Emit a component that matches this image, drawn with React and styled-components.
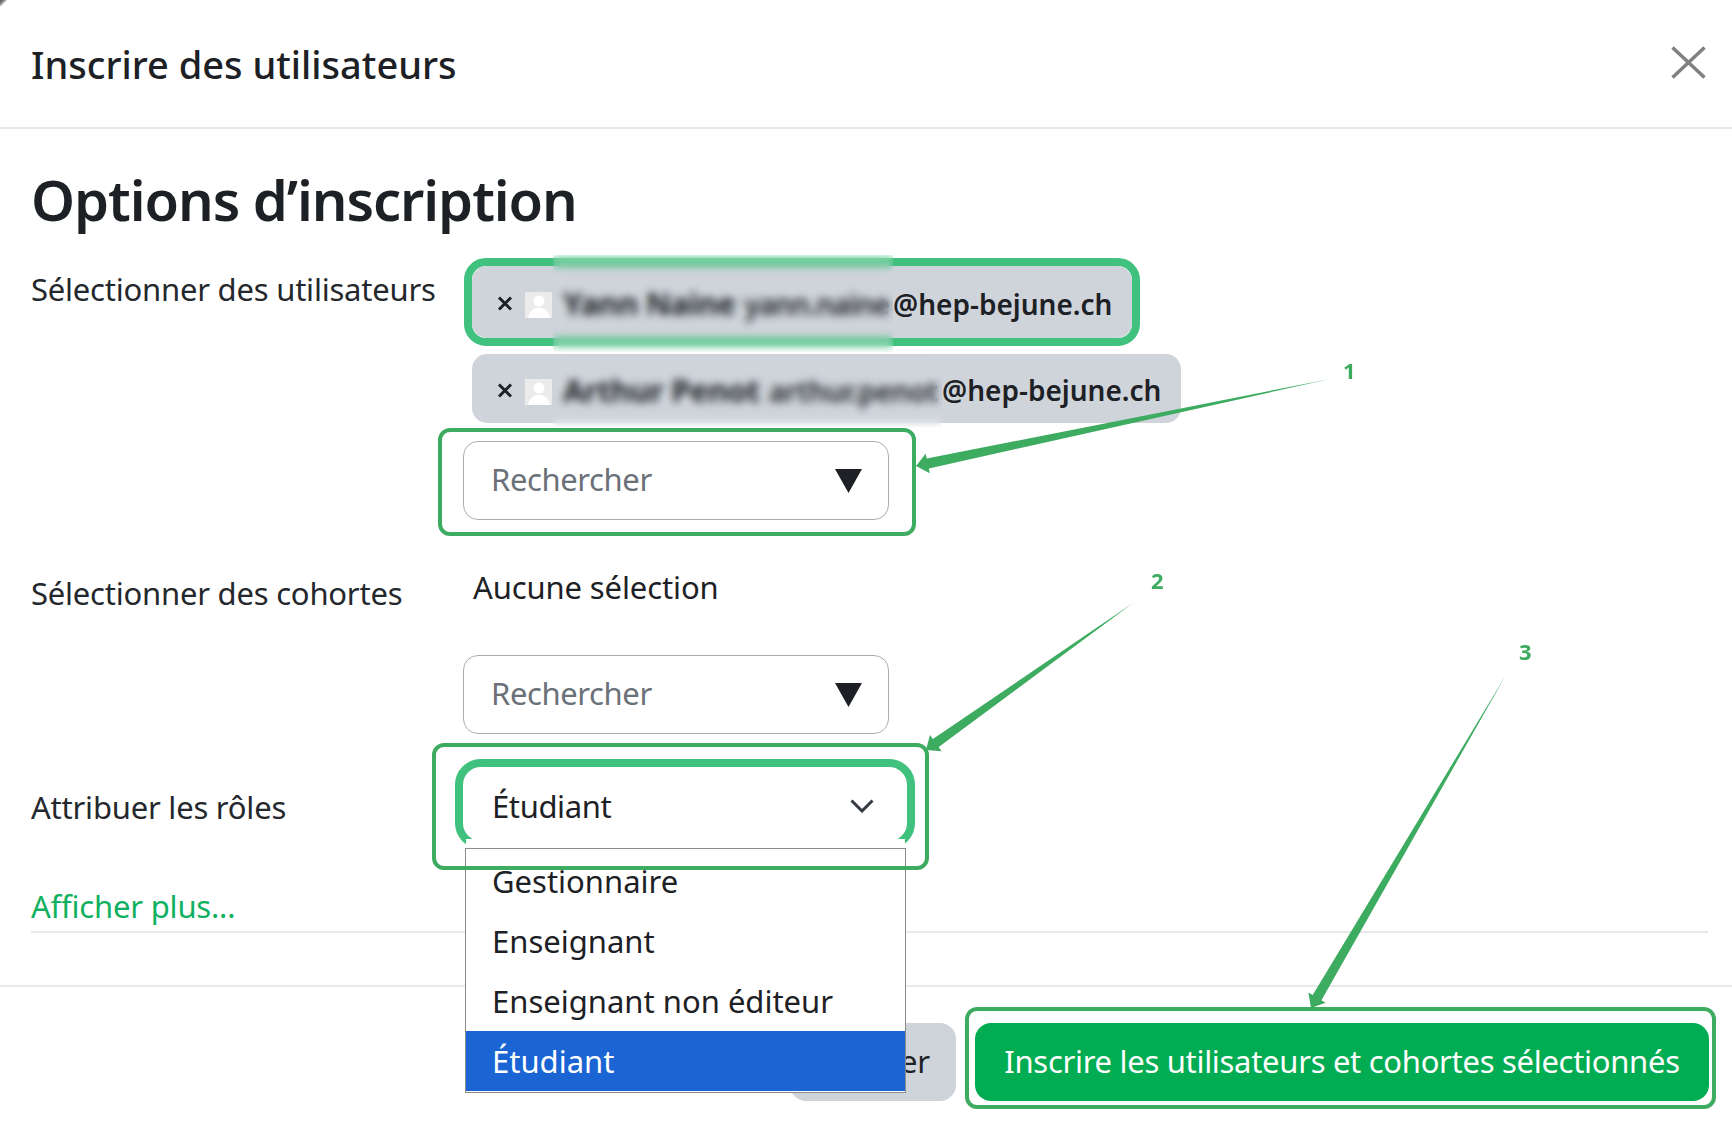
import React from "react";
import styled, { createGlobalStyle } from "styled-components";

const Global = createGlobalStyle`
    html, body {
        margin: 0;
        padding: 0;
        background: #fff;
    }
    * {
        box-sizing: border-box;
    }
    body {
        font-family: "Noto Sans", "Open Sans", sans-serif;
        color: #1d2125;
    }
`;

const GREEN = "#3dab60";

const Page = styled.div`
    position: relative;
    width: 1732px;
    height: 1127px;
    overflow: hidden;
    background: #fff;
`;

const Corner = styled.div`
    position: absolute;
    top: 0;
    left: 0;
    width: 7px;
    height: 6px;
    background: linear-gradient(135deg, #555 0%, #888 35%, transparent 62%);
`;

const Header = styled.header`
    height: 129px;
    padding: 1px 26px 0 31px;
    border-bottom: 2px solid #e6e8ec;
    display: flex;
    align-items: center;
    justify-content: space-between;
`;

const Title = styled.h1`
    margin: 0;
    font-size: 38px;
    line-height: 44px;
    font-weight: 500;
`;

const CloseBtn = styled.svg`
    width: 35px;
    height: 33px;
    margin-bottom: 4px;
`;

const Body = styled.main`
    padding: 37px 24px 52px 31px;
`;

const Heading = styled.h2`
    margin: 0 0 26px;
    font-size: 56px;
    line-height: 66px;
    font-weight: 600;
    letter-spacing: -1.05px;
`;

const FormRow = styled.div`
    display: grid;
    grid-template-columns: 432px 1fr;
    margin-top: ${(props) => props.$top || 0}px;
`;

const Label = styled.label`
    padding-top: ${(props) => props.$top}px;
    font-size: 31px;
    line-height: 44px;
    letter-spacing: -0.22px;
    color: #24282d;
`;

const Field = styled.div`
    display: flex;
    flex-direction: column;
    align-items: flex-start;
`;

const ChipOutline = styled.div`
    margin: 0 0 8px 1px;
    border: 8px solid #41c17e;
    border-radius: 22px;
`;

const Chip = styled.div`
    height: ${(props) => props.$height}px;
    margin-left: ${(props) => props.$left || 0}px;
    padding: 3px 20px 0 25px;
    display: flex;
    align-items: center;
    background: #ced4da;
    border-radius: 15px;
    white-space: nowrap;
`;

const ChipClose = styled.svg`
    width: 16px;
    height: 15px;
    margin-right: 12px;
    flex: none;
`;

const Avatar = styled.svg`
    width: 27px;
    height: 26px;
    margin: 3px 6px 0 0;
    flex: none;
`;

const Blurred = styled.span`
    position: relative;
    display: inline-flex;
    align-items: baseline;
    gap: 9px;
    width: ${(props) => props.$width}px;
    padding-left: 5px;
    &::after {
        content: "";
        position: absolute;
        inset: ${(props) => props.$out}px 0 ${(props) => props.$out}px -5px;
        backdrop-filter: blur(4px);
    }
`;

const Name = styled.span`
    font-size: 31px;
    line-height: 40px;
    font-weight: 700;
    letter-spacing: -0.4px;
`;

const Mail = styled.span`
    font-size: 28px;
    line-height: 40px;
    font-weight: 600;
    letter-spacing: ${(props) => props.$track}px;
`;

const Domain = styled.span`
    font-size: 28px;
    line-height: 40px;
    font-weight: 600;
`;

const Callout = styled.div`
    position: relative;
    margin-top: ${(props) => props.$top || 0}px;
    margin-left: ${(props) => props.$left || 0}px;
    width: ${(props) => props.$width}px;
    padding: ${(props) => props.$pad};
    &::after {
        content: "";
        position: absolute;
        inset: 0;
        border: 4px solid ${GREEN};
        border-radius: 12px;
        pointer-events: none;
        z-index: 3;
    }
`;

const SearchBox = styled.div`
    width: 426px;
    height: 79px;
    padding: 0 26px 4px 27px;
    display: flex;
    align-items: center;
    justify-content: space-between;
    border: 1.5px solid #a9adb3;
    border-radius: 15px;
    background: #fff;
    font-size: 31px;
    letter-spacing: -0.4px;
    color: #6a7178;
`;

const SearchSpaced = styled(SearchBox)`
    margin-top: 45px;
`;

const Caret = styled.svg`
    width: 27px;
    height: 24px;
    margin-top: 4px;
`;

const Plain = styled.div`
    font-size: 31px;
    line-height: 44px;
    letter-spacing: -0.12px;
    margin: -1px 0 1px 10px;
`;

const RoleSelect = styled.div`
    position: relative;
    width: 460px;
    height: 90px;
    padding: 3px 33px 0 29px;
    display: flex;
    align-items: center;
    justify-content: space-between;
    border: 8px solid #41c17e;
    border-radius: 26px;
    background: #fff;
    font-size: 31px;
    letter-spacing: -0.4px;
`;

const Chevron = styled.svg`
    width: 24px;
    height: 14px;
`;

const Menu = styled.ul`
    position: absolute;
    z-index: 2;
    top: 81px;
    left: 2px;
    width: 441px;
    height: 245px;
    margin: 0;
    padding: 2px 0 0;
    list-style: none;
    background: #fff;
    border: 1.5px solid #8b8b8b;
    &::before {
        content: "";
        position: absolute;
        top: -10px;
        left: 0;
        right: 0;
        height: 9px;
        background: #fff;
    }
`;

const MenuItem = styled.li`
    height: 60px;
    padding-left: 26px;
    display: flex;
    align-items: center;
    font-size: 31px;
    letter-spacing: 0;
    background: ${(props) => (props.$active ? "#1a64d3" : "transparent")};
    color: ${(props) => (props.$active ? "#fff" : "#1d2125")};
`;

const More = styled.div`
    margin-top: 14px;
    padding-bottom: 3px;
    border-bottom: 2px solid #e6e8ec;
    font-size: 31px;
    line-height: 44px;
    letter-spacing: -0.2px;
    color: #0fb160;
`;

const Footer = styled.footer`
    padding: 20px 16px 0 0;
    border-top: 2px solid #e6e8ec;
    display: flex;
    justify-content: flex-end;
    align-items: flex-start;
`;

const Btn = styled.button`
    height: 78px;
    border: 0;
    border-radius: 16px;
    padding-bottom: 3px;
    font-family: inherit;
    font-size: 31px;
    letter-spacing: -0.3px;
    white-space: nowrap;
    background: ${(props) => (props.$primary ? "#02ac52" : "#ced4da")};
    color: ${(props) => (props.$primary ? "#fff" : "#1d2125")};
`;

const CancelBtn = styled(Btn)`
    width: 166px;
    margin: 16px 9px 0 0;
`;

const PrimaryBtn = styled(Btn)`
    width: 734px;
`;

const Annotations = styled.svg`
    position: absolute;
    inset: 0;
    z-index: 4;
    pointer-events: none;
`;

const Marker = styled.span`
    position: absolute;
    z-index: 4;
    left: ${(props) => props.$x}px;
    top: ${(props) => props.$y}px;
    font-size: 22px;
    line-height: 26px;
    font-weight: 700;
    color: ${GREEN};
`;

// tapered arrow, thin at the tail and thick behind the head
const arrowPoints = ([x1, y1], [x2, y2], shaft, headLen, headWidth) => {
    const len = Math.hypot(x2 - x1, y2 - y1);
    const ux = (x2 - x1) / len;
    const uy = (y2 - y1) / len;
    const bx = x2 - ux * headLen;
    const by = y2 - uy * headLen;
    const nx = -uy;
    const ny = ux;
    const pt = (x, y) => `${x.toFixed(1)},${y.toFixed(1)}`;
    return [
        pt(x1, y1),
        pt(bx + (nx * shaft) / 2, by + (ny * shaft) / 2),
        pt(bx + (nx * headWidth) / 2, by + (ny * headWidth) / 2),
        pt(x2, y2),
        pt(bx - (nx * headWidth) / 2, by - (ny * headWidth) / 2),
        pt(bx - (nx * shaft) / 2, by - (ny * shaft) / 2),
    ].join(" ");
};

const arrows = [
    [[1330, 379], [916, 466]],
    [[1133, 603], [926, 750]],
    [[1506, 675], [1311, 1008]],
];

const CloseMark = () => (
    <ChipClose viewBox="0 0 16 15">
        <path d="M2 1.5 14 13.5M14 1.5 2 13.5" stroke="#1d2125" strokeWidth="3" fill="none" />
    </ChipClose>
);

const UserPic = () => (
    <Avatar viewBox="0 0 27 26">
        <rect width="27" height="26" fill="#ebebeb" />
        <circle cx="14" cy="9" r="5.5" fill="#fff" />
        <path d="M3 26c1-6 5-9 8-10h6c3 1 7 4 8 10z" fill="#fff" />
    </Avatar>
);

const DownCaret = () => (
    <Caret viewBox="0 0 27 24">
        <path d="M0 0H27L13.5 24z" fill="#1d2125" />
    </Caret>
);

const options = ["Gestionnaire", "Enseignant", "Enseignant non éditeur", "Étudiant"];

const App = () => {
    return (
        <Page>
            <Global />
            <Corner />
            <Header>
                <Title>Inscrire des utilisateurs</Title>
                <CloseBtn viewBox="0 0 35 33">
                    <path d="M1.5 1.5 33.5 31.5M33.5 1.5 1.5 31.5" stroke="#808080" strokeWidth="3.5" fill="none" />
                </CloseBtn>
            </Header>
            <Body>
                <Heading>Options d’inscription</Heading>
                <FormRow>
                    <Label $top={9}>Sélectionner des utilisateurs</Label>
                    <Field>
                        <ChipOutline>
                            <Chip $height={72}>
                                <CloseMark />
                                <UserPic />
                                <Blurred $width={335} $out={-28}>
                                    <Name>Yann Naine</Name>
                                    <Mail $track={-0.7}>yann.naine</Mail>
                                </Blurred>
                                <Domain>@hep-bejune.ch</Domain>
                            </Chip>
                        </ChipOutline>
                        <Chip $height={69} $left={9}>
                            <CloseMark />
                            <UserPic />
                            <Blurred $width={384} $out={-16}>
                                <Name>Arthur Penot</Name>
                                <Mail $track={-0.2}>arthur.penot</Mail>
                            </Blurred>
                            <Domain>@hep-bejune.ch</Domain>
                        </Chip>
                        <Callout $top={5} $left={-25} $width={478} $pad="13px 27px 16px 25px">
                            <SearchBox>
                                Rechercher
                                <DownCaret />
                            </SearchBox>
                        </Callout>
                    </Field>
                </FormRow>
                <FormRow $top={30}>
                    <Label $top={5}>Sélectionner des cohortes</Label>
                    <Field>
                        <Plain>Aucune sélection</Plain>
                        <SearchSpaced>
                            Rechercher
                            <DownCaret />
                        </SearchSpaced>
                    </Field>
                </FormRow>
                <FormRow $top={9}>
                    <Label $top={42}>Attribuer les rôles</Label>
                    <Field>
                        <Callout $left={-31} $width={497} $pad="16px 14px 21px 23px">
                            <RoleSelect>
                                Étudiant
                                <Chevron viewBox="0 0 24 14">
                                    <path d="M1.5 1.5 12 12 22.5 1.5" stroke="#343a40" strokeWidth="3" fill="none" />
                                </Chevron>
                                <Menu>
                                    {options.map((item, index) => (
                                        <MenuItem key={index} $active={index === 3}>
                                            {item}
                                        </MenuItem>
                                    ))}
                                </Menu>
                            </RoleSelect>
                        </Callout>
                    </Field>
                </FormRow>
                <More>Afficher plus...</More>
            </Body>
            <Footer>
                <CancelBtn>Annuler</CancelBtn>
                <Callout $width={751} $pad="16px 7px 8px 10px">
                    <PrimaryBtn $primary>Inscrire les utilisateurs et cohortes sélectionnés</PrimaryBtn>
                </Callout>
            </Footer>
            <Annotations width="1732" height="1127" viewBox="0 0 1732 1127">
                {arrows.map(([from, to], index) => (
                    <polygon key={index} points={arrowPoints(from, to, 10, 12, 20)} fill={GREEN} />
                ))}
            </Annotations>
            <Marker $x={1343} $y={357}>1</Marker>
            <Marker $x={1151} $y={567}>2</Marker>
            <Marker $x={1519} $y={638}>3</Marker>
        </Page>
    );
};

export default App;
